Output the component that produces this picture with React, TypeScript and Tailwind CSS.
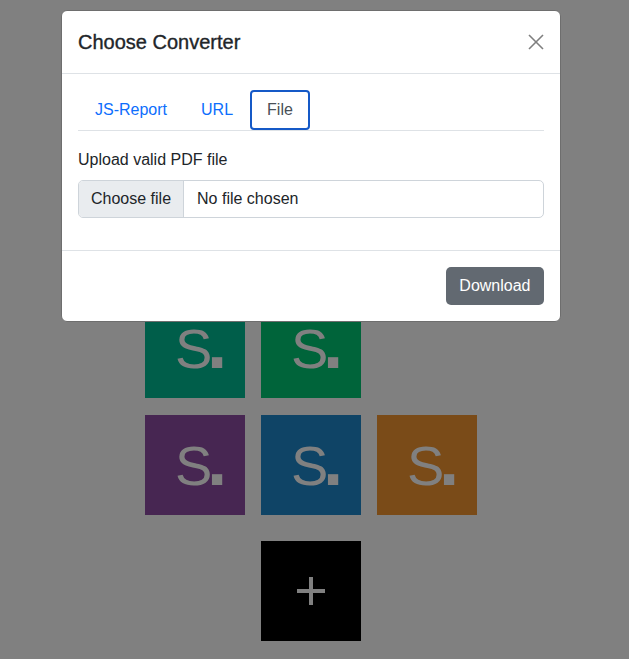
import React from "react";

const Tile = ({ color }: { color: string }) => (
  <div
    className="w-[100px] h-[100px] text-[56px] leading-[56px] text-[#808080] pl-[30px] pt-[23px] whitespace-nowrap"
    style={{ backgroundColor: color }}
  >
    <span className="tracking-[-5px]">S</span>
    <span className="inline-block font-bold leading-[56px] scale-[1.3] origin-[0px_47px]">.</span>
  </div>
);

export default function App() {
  return (
    <div
      className="relative min-h-screen w-full bg-[#808080] overflow-hidden"
      style={{ fontFamily: '"Liberation Sans", Arial, sans-serif', height: 659 }}
    >
      {/* page behind the backdrop */}
      <div className="pl-[145px] pt-[298px] flex flex-col">
        <div className="flex gap-[16px]">
          <Tile color="#005e4a" />
          <Tile color="#00643a" />
        </div>
        <div className="flex gap-[16px] mt-[17px]">
          <Tile color="#472652" />
          <Tile color="#0f4466" />
          <Tile color="#7a4b18" />
        </div>
        <div className="flex mt-[26px] pl-[116px]">
          <div className="w-[100px] h-[100px] bg-black flex items-center justify-center">
            <svg width="32" height="32" viewBox="0 0 32 32">
              <line x1="2" y1="16" x2="30" y2="16" stroke="#808080" strokeWidth="4" />
              <line x1="16" y1="2" x2="16" y2="30" stroke="#808080" strokeWidth="4" />
            </svg>
          </div>
        </div>
      </div>

      {/* modal */}
      <div className="absolute left-[61px] top-[10px] w-[500px] bg-white border border-[#6e6e6e] rounded-[6px] text-[#212529]">
        <div className="flex items-center justify-between px-[16px] py-[16px] border-b border-[#dee2e6]">
          <h5 className="text-[20px] leading-[30px] font-medium [-webkit-text-stroke:0.35px_#212529]">
            Choose Converter
          </h5>
          <svg width="16" height="16" viewBox="0 0 16 16">
            <line x1="1" y1="1" x2="15" y2="15" stroke="#7f7f7f" strokeWidth="1.6" />
            <line x1="15" y1="1" x2="1" y2="15" stroke="#7f7f7f" strokeWidth="1.6" />
          </svg>
        </div>
        <div className="p-[16px]">
          <div className="flex border-b border-[#dee2e6]">
            <div className="px-[17px] py-[8px] text-[16px] leading-[24px] text-[#0d6efd]">JS-Report</div>
            <div className="px-[17px] py-[8px] text-[16px] leading-[24px] text-[#0d6efd]">URL</div>
            <div className="px-[15px] py-[6px] text-[16px] leading-[24px] text-[#495057] border-2 border-[#1559c7] rounded-[4px] bg-white">
              File
            </div>
          </div>
          <div className="mt-[17px] text-[16px] leading-[24px] mb-[8px]">Upload valid PDF file</div>
          <div className="flex h-[38px] border border-[#ced4da] rounded-[5px] overflow-hidden mb-[16px] text-[16px]">
            <div className="bg-[#e9ecef] px-[12px] flex items-center border-r border-[#ced4da]">Choose file</div>
            <div className="px-[13px] flex items-center">No file chosen</div>
          </div>
        </div>
        <div className="border-t border-[#dee2e6] p-[12px] flex justify-end">
          <div className="m-[4px] h-[38px] px-[13.5px] flex items-center rounded-[5px] bg-[#626971] text-white text-[16px]">
            Download
          </div>
        </div>
      </div>
    </div>
  );
}
